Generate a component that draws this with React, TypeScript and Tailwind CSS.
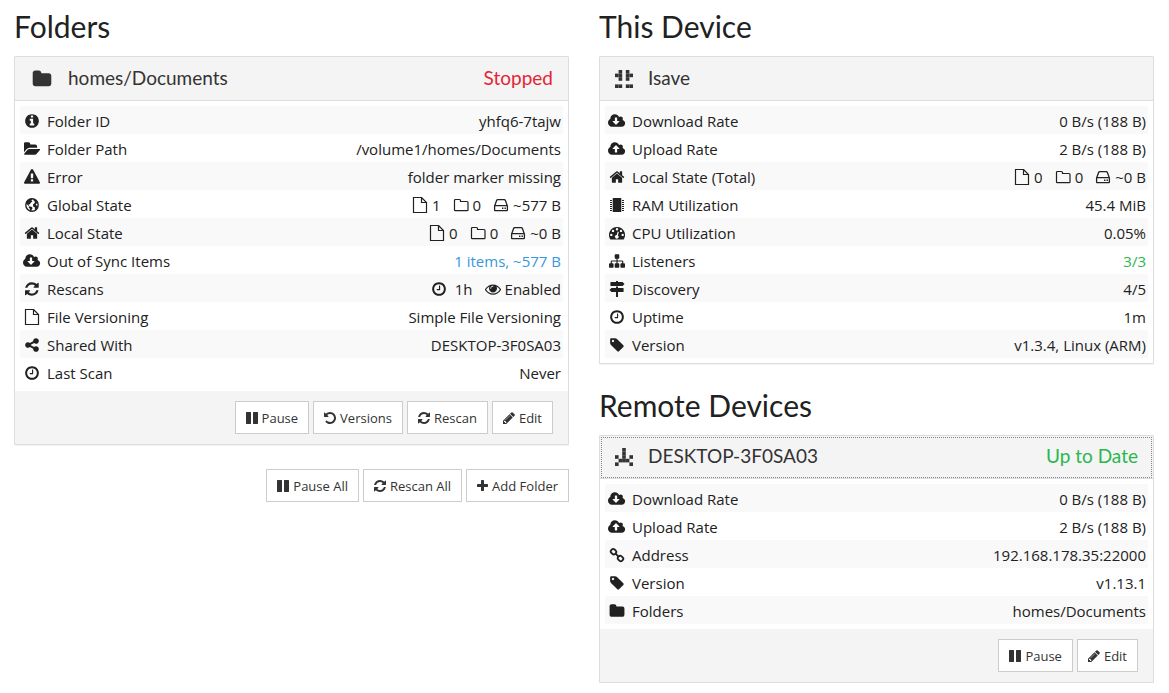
import { useState } from 'react';
import type { ReactNode } from 'react';

// viewBox + path per glyph, all glyphs share a 1792 unit em
const GLYPHS: Record<string, { box?: string; d: string }> = {
  folder: { box: '0 0 1792 1792', d: 'M1728 608v704q0 92-66 158t-158 66h-1216q-92 0-158-66t-66-158v-960q0-92 66-158t158-66h320q92 0 158 66t66 158v32h672q92 0 158 66t66 158z' },
  folderOpen: { box: '0 0 1824 1792', d: 'M1815 952q0 31-31 66l-336 396q-43 51-120.5 86.5t-143.5 35.5h-1088q-34 0-60.5-13t-26.5-43q0-31 31-66l336-396q43-51 120.5-86.5t143.5-35.5h1088q34 0 60.5 13t26.5 43zm-343-344v160h-832q-94 0-197 47.5t-164 119.5l-337 396-5 6q0-4-.5-12.5t-.5-12.5v-960q0-92 66-158t158-66h320q92 0 158 66t66 158v32h544q92 0 158 66t66 158z' },
  info: { d: 'M1152 1376v-160q0-14-9-23t-23-9h-96v-512q0-14-9-23t-23-9h-320q-14 0-23 9t-9 23v160q0 14 9 23t23 9h96v320h-96q-14 0-23 9t-9 23v160q0 14 9 23t23 9h448q14 0 23-9t9-23zm-128-896v-160q0-14-9-23t-23-9h-192q-14 0-23 9t-9 23v160q0 14 9 23t23 9h192q14 0 23-9t9-23zm640 416q0 209-103 385.5t-279.5 279.5-385.5 103-385.5-103-279.5-279.5-103-385.5 103-385.5 279.5-279.5 385.5-103 385.5 103 279.5 279.5 103 385.5z' },
  warning: { d: 'M1024 1375v-190q0-14-9.5-23.5t-22.5-9.5h-192q-13 0-22.5 9.5t-9.5 23.5v190q0 14 9.5 23.5t22.5 9.5h192q13 0 22.5-9.5t9.5-23.5zm-2-374l18-459q0-12-10-19-13-11-24-11h-220q-11 0-24 11-10 7-10 21l17 457q0 10 10 16.5t24 6.5h185q14 0 23.5-6.5t10.5-16.5zm-14-934l768 1408q35 63-2 126-17 29-46.5 46t-63.5 17h-1536q-34 0-63.5-17t-46.5-46q-37-63-2-126l768-1408q17-31 47-49t65-18 65 18 47 49z' },
  home: { d: 'M1472 992v480q0 26-19 45t-45 19h-384v-384h-256v384h-384q-26 0-45-19t-19-45v-480q0-1 .5-3t.5-3l575-474 575 474q1 2 1 6zm223-69l-62 74q-8 9-21 11h-3q-13 0-21-7l-692-577-692 577q-12 8-24 7-13-2-21-11l-62-74q-8-10-7-23.5t11-21.5l719-599q32-26 76-26t76 26l244 204v-195q0-14 9-23t23-9h192q14 0 23 9t9 23v408l219 182q10 8 11 21.5t-7 23.5z' },
  download: { box: '-64 0 1920 1792', d: 'M1216 928q0-14-9-23t-23-9h-224v-352q0-13-9.5-22.5t-22.5-9.5h-192q-13 0-22.5 9.5t-9.5 22.5v352h-224q-13 0-22.5 9.5t-9.5 22.5q0 14 9 23l352 352q9 9 23 9t23-9l351-351q10-12 10-24zm640 224q0 159-112.5 271.5t-271.5 112.5h-1088q-185 0-316.5-131.5t-131.5-316.5q0-130 70-240t188-165q-2-30-2-43 0-212 150-362t362-150q156 0 285.5 87t188.5 231q71-62 166-62 106 0 181 75t75 181q0 76-41 138 130 31 213.5 135.5t83.5 238.5z' },
  upload: { box: '-64 0 1920 1792', d: 'M1216 864q0-14-9-23l-352-352q-9-9-23-9t-23 9l-351 351q-10 12-10 24 0 14 9 23t23 9h224v352q0 13 9.5 22.5t22.5 9.5h192q13 0 22.5-9.5t9.5-22.5v-352h224q13 0 22.5-9.5t9.5-22.5zm640 288q0 159-112.5 271.5t-271.5 112.5h-1088q-185 0-316.5-131.5t-131.5-316.5q0-130 70-240t188-165q-2-30-2-43 0-212 150-362t362-150q156 0 285.5 87t188.5 231q71-62 166-62 106 0 181 75t75 181q0 76-41 138 130 31 213.5 135.5t83.5 238.5z' },
  refresh: { box: '128 0 1536 1792', d: 'M1639 1056q0 5-1 7-64 268-268 434.5t-478 166.5q-146 0-282.5-55t-243.5-157l-129 129q-19 19-45 19t-45-19-19-45v-448q0-26 19-45t45-19h448q26 0 45 19t19 45-19 45l-137 137q71 66 161 102t187 36q134 0 250-65t186-179q11-17 53-117 8-23 30-23h192q13 0 22.5 9.5t9.5 22.5zm25-800v448q0 26-19 45t-45 19h-448q-26 0-45-19t-19-45 19-45l138-138q-148-137-349-137-134 0-250 65t-186 179q-11 17-53 117-8 23-30 23h-199q-13 0-22.5-9.5t-9.5-22.5v-7q65-268 270-434.5t480-166.5q146 0 284 55.5t245 156.5l130-129q19-19 45-19t45 19 19 45z' },
  share: { d: 'M1344 1024q133 0 226.5 93.5t93.5 226.5-93.5 226.5-226.5 93.5-226.5-93.5-93.5-226.5q0-12 2-34l-360-180q-92 86-218 86-133 0-226.5-93.5t-93.5-226.5 93.5-226.5 226.5-93.5q126 0 218 86l360-180q-2-22-2-34 0-133 93.5-226.5t226.5-93.5 226.5 93.5 93.5 226.5-93.5 226.5-226.5 93.5q-126 0-218-86l-360 180q2 22 2 34t-2 34l360 180q92-86 218-86z' },
  clock: { d: 'M1024 544v448q0 14-9 23t-23 9h-320q-14 0-23-9t-9-23v-64q0-14 9-23t23-9h224v-352q0-14 9-23t23-9h64q14 0 23 9t9 23zm416 352q0-148-73-273t-198-198-273-73-273 73-198 198-73 273 73 273 198 198 273 73 273-73 198-198 73-273zm224 0q0 209-103 385.5t-279.5 279.5-385.5 103-385.5-103-279.5-279.5-103-385.5 103-385.5 279.5-279.5 385.5-103 385.5 103 279.5 279.5 103 385.5z' },
  eye: { d: 'M1664 960q-152-236-381-353 61 104 61 225 0 185-131.5 316.5t-316.5 131.5-316.5-131.5-131.5-316.5q0-121 61-225-229 117-381 353 133 205 333.5 326.5t434.5 121.5 434.5-121.5 333.5-326.5zm-720-384q0-20-14-34t-34-14q-125 0-214.5 89.5t-89.5 214.5q0 20 14 34t34 14 34-14 14-34q0-86 61-147t147-61q20 0 34-14t14-34zm848 384q0 34-20 69-140 230-376.5 368.5t-499.5 138.5-499.5-139-376.5-368q-20-35-20-69t20-69q140-229 376.5-368t499.5-139 499.5 139 376.5 368q20 35 20 69z' },
  pause: { box: '128 0 1536 1792', d: 'M1664 192v1408q0 26-19 45t-45 19h-512q-26 0-45-19t-19-45v-1408q0-26 19-45t45-19h512q26 0 45 19t19 45zm-896 0v1408q0 26-19 45t-45 19h-512q-26 0-45-19t-19-45v-1408q0-26 19-45t45-19h512q26 0 45 19t19 45z' },
  undo: { box: '128 0 1536 1792', d: 'M1664 896q0 156-61 298t-164 245-245 164-298 61q-172 0-327-72.5t-264-204.5q-7-10-6.5-22.5t8.5-20.5l137-138q10-9 25-9 16 2 23 12 73 95 179 147t225 52q104 0 198.5-40.5t163.5-109.5 109.5-163.5 40.5-198.5-40.5-198.5-109.5-163.5-163.5-109.5-198.5-40.5q-98 0-188 35.5t-160 101.5l137 138q31 30 14 69-17 40-59 40h-448q-26 0-45-19t-19-45v-448q0-42 40-59 39-17 69 14l130 129q107-101 244.5-156.5t284.5-55.5q156 0 298 61t245 164 164 245 61 298z' },
  pencil: { box: '128 0 1536 1792', d: 'M491 1536l91-91-235-235-91 91v107h128v128h107zm523-928q0-22-22-22-10 0-17 7l-542 542q-7 7-7 17 0 22 22 22 10 0 17-7l542-542q7-7 7-17zm-54-192l416 416-832 832h-416v-416zm683 96q0 53-37 90l-166 166-416-416 166-165q36-38 90-38 53 0 91 38l235 234q37 39 37 91z' },
  plus: { box: '192 0 1408 1792', d: 'M1600 736v192q0 40-28 68t-68 28h-416v416q0 40-28 68t-68 28h-192q-40 0-68-28t-28-68v-416h-416q-40 0-68-28t-28-68v-192q0-40 28-68t68-28h416v-416q0-40 28-68t68-28h192q40 0 68 28t28 68v416h416q40 0 68 28t28 68z' },
  sitemap: { d: 'M1792 1248v320q0 40-28 68t-68 28h-320q-40 0-68-28t-28-68v-320q0-40 28-68t68-28h96v-192h-512v192h96q40 0 68 28t28 68v320q0 40-28 68t-68 28h-320q-40 0-68-28t-28-68v-320q0-40 28-68t68-28h96v-192h-512v192h96q40 0 68 28t28 68v320q0 40-28 68t-68 28h-320q-40 0-68-28t-28-68v-320q0-40 28-68t68-28h96v-192q0-52 38-90t90-38h512v-192h-96q-40 0-68-28t-28-68v-320q0-40 28-68t68-28h320q40 0 68 28t28 68v320q0 40-28 68t-68 28h-96v192h512q52 0 90 38t38 90v192h96q40 0 68 28t28 68z' },
  tag: { d: 'M576 448q0-53-37.5-90.5t-90.5-37.5-90.5 37.5-37.5 90.5 37.5 90.5 90.5 37.5 90.5-37.5 37.5-90.5zm1067 576q0 53-37 90l-491 492q-39 37-91 37-53 0-90-37l-715-716q-38-37-64.5-101t-26.5-117v-416q0-52 38-90t90-38h416q53 0 117 26.5t102 64.5l715 714q37 39 37 91z' },
};

// Outlined and multi-part icons on a 16px grid
const DRAWN: Record<string, ReactNode> = {
  file: <path d="M1.5.5h8l5 5v10h-13zM9.5.5v5h5" fill="none" stroke="currentColor" strokeWidth="1.2" />,
  folderO: <path d="M1.5 13V3.5q0-1 1-1h4q1 0 1 1v1H14q1 0 1 1V13q0 .6-.8.6H2.3q-.8 0-.8-.6z" fill="none" stroke="currentColor" strokeWidth="1.2" />,
  hdd: (
    <>
      <path d="M1.6 9l2-5.5q.3-.8 1.2-.8h6.4q.9 0 1.2.8l2 5.5v4q0 .7-.7.7H2.3q-.7 0-.7-.7zM1.6 8.7h12.8" fill="none" stroke="currentColor" strokeWidth="1.3" />
      <path d="M9 10.5h1.4v1.4H9zM11.5 10.5h1.4v1.4h-1.4z" />
    </>
  ),
  globe: (
    <>
      <circle cx="8" cy="8" r="6.2" fill="none" stroke="currentColor" strokeWidth="1.4" />
      <path d="M2.4 4.6L6 1.800l2.600.2-1.200 1.500 1 .9-1.700 1.300-.8 1.500-1.500.2.9 1.200-.6.3-1.500-1.400L2 6.800zM5 9.200l2.400.5 1.300 1.400-1 1.300-.7 2.200-1.200-.5.1-2.300-1.200-1.200zM9.800 2l2.500 1.300 1.900 3.700-1.600-.4-.9.8 1 1.300 1.100-.1-.4 2-1.700 2.400-1-.6.3-1.900-1.900-1-.1-2 1.300-1.300.9-1.400-1.500-.9z" />
    </>
  ),
  chip: (
    <>
      <path d="M4.3.9h7.4q.6 0 .6.6v12.9q0 .6-.6.6H4.3q-.6 0-.6-.6V1.5q0-.6.6-.6z" />
      <path d="M1 3h2v1H1zM1 5h2v1H1zM1 7h2v1H1zM1 9h2v1H1zM1 11h2v1H1zM1 13h2v1H1zM13 3h2v1h-2zM13 5h2v1h-2zM13 7h2v1h-2zM13 9h2v1h-2zM13 11h2v1h-2zM13 13h2v1h-2z" />
    </>
  ),
  gauge: (
    <path
      fillRule="evenodd"
      d="M8 2a8 8 0 0 1 6.800 12.200q-.2.4-.7.4H1.900q-.5 0-.7-.4A8 8 0 0 1 8 2zM2.300 8.700a1.200 1.200 0 1 0 0 2.400 1.200 1.200 0 0 0 0-2.400zM4 4.700a1.200 1.200 0 1 0 0 2.400 1.200 1.200 0 0 0 0-2.400zM8 3a1.200 1.200 0 1 0 0 2.400A1.200 1.200 0 0 0 8 3zM12 4.700a1.200 1.200 0 1 0 0 2.400 1.200 1.200 0 0 0 0-2.400zM13.700 8.700a1.200 1.200 0 1 0 0 2.400 1.200 1.200 0 0 0 0-2.400zM8.700 6.600L7.700 10a1.800 1.800 0 1 0 1.200.4l.9-3.500z"
    />
  ),
  signs: <path d="M7 0h2v1h4.6L15.500 3l-1.900 2H2q-.6 0-.6-.6V1.600Q1.400 1 2 1h5zM7 5.500h2V7h5q.6 0 .6.6v2.800q0 .6-.6.6H9v5H7v-5H2.400L.5 9l1.900-2H7z" />,
  link: (
    <g fill="none" stroke="currentColor" strokeWidth="1.8" strokeLinejoin="round">
      <rect x="-2.700" y="-2.300" width="5.400" height="4.600" rx="1.900" transform="translate(4.500 4.700) rotate(45)" />
      <rect x="-2.700" y="-2.300" width="5.400" height="4.600" rx="1.900" transform="translate(11.500 11.500) rotate(45)" />
      <path d="M6 6.200l4 3.800" />
    </g>
  ),
};

function Icon({ name, className = 'h-4' }: { name: string; className?: string }) {
  const glyph = GLYPHS[name];
  return (
    <svg
      viewBox={glyph ? glyph.box ?? '0 0 1792 1792' : '0 0 16 16'}
      className={`${className} w-auto shrink-0`}
      fill="currentColor"
      aria-hidden="true"
    >
      {glyph ? <path d={glyph.d} /> : DRAWN[name]}
    </svg>
  );
}

// 5x5 symmetric device fingerprint
function Identicon({ rows }: { rows: string[] }) {
  return (
    <svg viewBox="0 0 20 20" className="size-[18px]" fill="currentColor" aria-hidden="true">
      {rows.flatMap((row, y) =>
        [...row].map((c, x) => c === '#' && <rect key={`${x}-${y}`} x={x * 4} y={y * 4} width="4" height="4" />)
      )}
    </svg>
  );
}

interface Row {
  icon: string;
  label: string;
  value: ReactNode;
}

function Counts({ files, folders, size }: { files: number; folders: number; size: string }) {
  return (
    <span className="flex items-center justify-end gap-3">
      <span className="flex items-center gap-1"><Icon name="file" />{files}</span>
      <span className="flex items-center gap-1"><Icon name="folderO" />{folders}</span>
      <span className="flex items-center gap-1"><Icon name="hdd" />{size}</span>
    </span>
  );
}

const FOLDER_ROWS: Row[] = [
  { icon: 'info', label: 'Folder ID', value: 'yhfq6-7tajw' },
  { icon: 'folderOpen', label: 'Folder Path', value: '/volume1/homes/Documents' },
  { icon: 'warning', label: 'Error', value: 'folder marker missing' },
  { icon: 'globe', label: 'Global State', value: <Counts files={1} folders={0} size="~577 B" /> },
  { icon: 'home', label: 'Local State', value: <Counts files={0} folders={0} size="~0 B" /> },
  { icon: 'download', label: 'Out of Sync Items', value: <a href="#needed" className="text-[#3498db]">1 items, ~577 B</a> },
  {
    icon: 'refresh',
    label: 'Rescans',
    value: (
      <span className="flex items-center justify-end gap-3">
        <span className="flex items-center gap-2"><Icon name="clock" />1h</span>
        <span className="flex items-center gap-1"><Icon name="eye" />Enabled</span>
      </span>
    ),
  },
  { icon: 'file', label: 'File Versioning', value: 'Simple File Versioning' },
  { icon: 'share', label: 'Shared With', value: 'DESKTOP-3F0SA03' },
  { icon: 'clock', label: 'Last Scan', value: 'Never' },
];

const DEVICE_ROWS: Row[] = [
  { icon: 'download', label: 'Download Rate', value: '0 B/s (188 B)' },
  { icon: 'upload', label: 'Upload Rate', value: '2 B/s (188 B)' },
  { icon: 'home', label: 'Local State (Total)', value: <Counts files={0} folders={0} size="~0 B" /> },
  { icon: 'chip', label: 'RAM Utilization', value: '45.4 MiB' },
  { icon: 'gauge', label: 'CPU Utilization', value: '0.05%' },
  { icon: 'sitemap', label: 'Listeners', value: <span className="text-[#29b74e]">3/3</span> },
  { icon: 'signs', label: 'Discovery', value: '4/5' },
  { icon: 'clock', label: 'Uptime', value: '1m' },
  { icon: 'tag', label: 'Version', value: 'v1.3.4, Linux (ARM)' },
];

const REMOTE_ROWS: Row[] = [
  { icon: 'download', label: 'Download Rate', value: '0 B/s (188 B)' },
  { icon: 'upload', label: 'Upload Rate', value: '2 B/s (188 B)' },
  { icon: 'link', label: 'Address', value: '192.168.178.35:22000' },
  { icon: 'tag', label: 'Version', value: 'v1.13.1' },
  { icon: 'folder', label: 'Folders', value: 'homes/Documents' },
];

function Button({ icon, children }: { icon: string; children: ReactNode }) {
  return (
    <button className="flex h-[33px] items-center gap-1 border border-[#ccc] bg-white px-[10px] text-[13px] text-[#333] hover:bg-gray-100">
      <Icon name={icon} className="h-[14px]" />
      {children}
    </button>
  );
}

interface PanelProps {
  icon: ReactNode;
  title: string;
  status?: string;
  statusClass?: string;
  focused?: boolean;
  rows: Row[];
  footer?: ReactNode;
}

function Panel({ icon, title, status, statusClass = '', focused = false, rows, footer }: PanelProps) {
  const [open, setOpen] = useState(true);

  return (
    <section className="rounded-[1px] border border-[#ddd] bg-white shadow-[0_1px_1px_rgba(0,0,0,0.05)]">
      <button
        onClick={() => setOpen(!open)}
        aria-expanded={open}
        className={`flex w-full items-center border-b border-[#ddd] bg-[#f4f4f4] pr-[15px] pl-2 text-left font-[Lato] text-[19px] leading-6 text-[#333] ${
          focused ? 'h-[43px] outline-1 -outline-offset-2 outline-dotted outline-[#888]' : 'h-11'
        }`}
      >
        {icon}
        <span className="flex-1 pb-[2px]">{title}</span>
        <span className={`pb-[2px] ${statusClass}`}>{status}</span>
      </button>
      {open && (
        <div className="p-[5px]">
          <table className="w-full border-collapse">
            <tbody>
              {rows.map((r) => (
                <tr key={r.label} className="h-7 odd:bg-[#f9f9f9]">
                  <th scope="row" className="p-0 pt-[2px] pl-[2px] text-left font-normal">
                    <span className="flex items-center gap-[5px]">
                      <span className="flex w-5 justify-center"><Icon name={r.icon} /></span>
                      {r.label}
                    </span>
                  </th>
                  <td className="p-0 pt-[2px] pr-[2px] text-right">{r.value}</td>
                </tr>
              ))}
            </tbody>
          </table>
        </div>
      )}
      {open && footer && (
        <div className="flex justify-end gap-1 bg-[#f4f4f4] py-[10px] pr-[15px]">{footer}</div>
      )}
    </section>
  );
}

function Heading({ children }: { children: ReactNode }) {
  return <h3 className="mb-[14px] font-[Lato] text-[30px] leading-8">{children}</h3>;
}

export default function App() {
  return (
    <main className="grid grid-cols-2 items-start gap-[30px] bg-white px-[15px] pt-[10px] pl-[14px] font-['Open_Sans',sans-serif] text-[15px] leading-5 text-[#212121]">
      <div>
        <Heading>Folders</Heading>
        <Panel
          icon={<span className="mr-4 ml-[9px]"><Icon name="folder" className="h-5" /></span>}
          title="homes/Documents"
          status="Stopped"
          statusClass="text-[#e42533]"
          rows={FOLDER_ROWS}
          footer={
            <>
              <Button icon="pause">Pause</Button>
              <Button icon="undo">Versions</Button>
              <Button icon="refresh">Rescan</Button>
              <Button icon="pencil">Edit</Button>
            </>
          }
        />
        <div className="mt-6 flex justify-end gap-1">
          <Button icon="pause">Pause All</Button>
          <Button icon="refresh">Rescan All</Button>
          <Button icon="plus">Add Folder</Button>
        </div>
      </div>

      <div>
        <Heading>This Device</Heading>
        <Panel
          icon={<span className="mr-[15px] ml-[7px]"><Identicon rows={['.#.#.', '##.##', '.#.#.', '.....', '##.##']} /></span>}
          title="Isave"
          rows={DEVICE_ROWS}
        />
        <div className="mt-[25px]">
          <Heading>Remote Devices</Heading>
          <Panel
            icon={<span className="mr-[15px] ml-[7px]"><Identicon rows={['..#..', '..#..', '#.#.#', '.###.', '#...#']} /></span>}
            title="DESKTOP-3F0SA03"
            status="Up to Date"
            statusClass="text-[#29b74e]"
            focused
            rows={REMOTE_ROWS}
            footer={
              <>
                <Button icon="pause">Pause</Button>
                <Button icon="pencil">Edit</Button>
              </>
            }
          />
        </div>
      </div>
    </main>
  );
}
